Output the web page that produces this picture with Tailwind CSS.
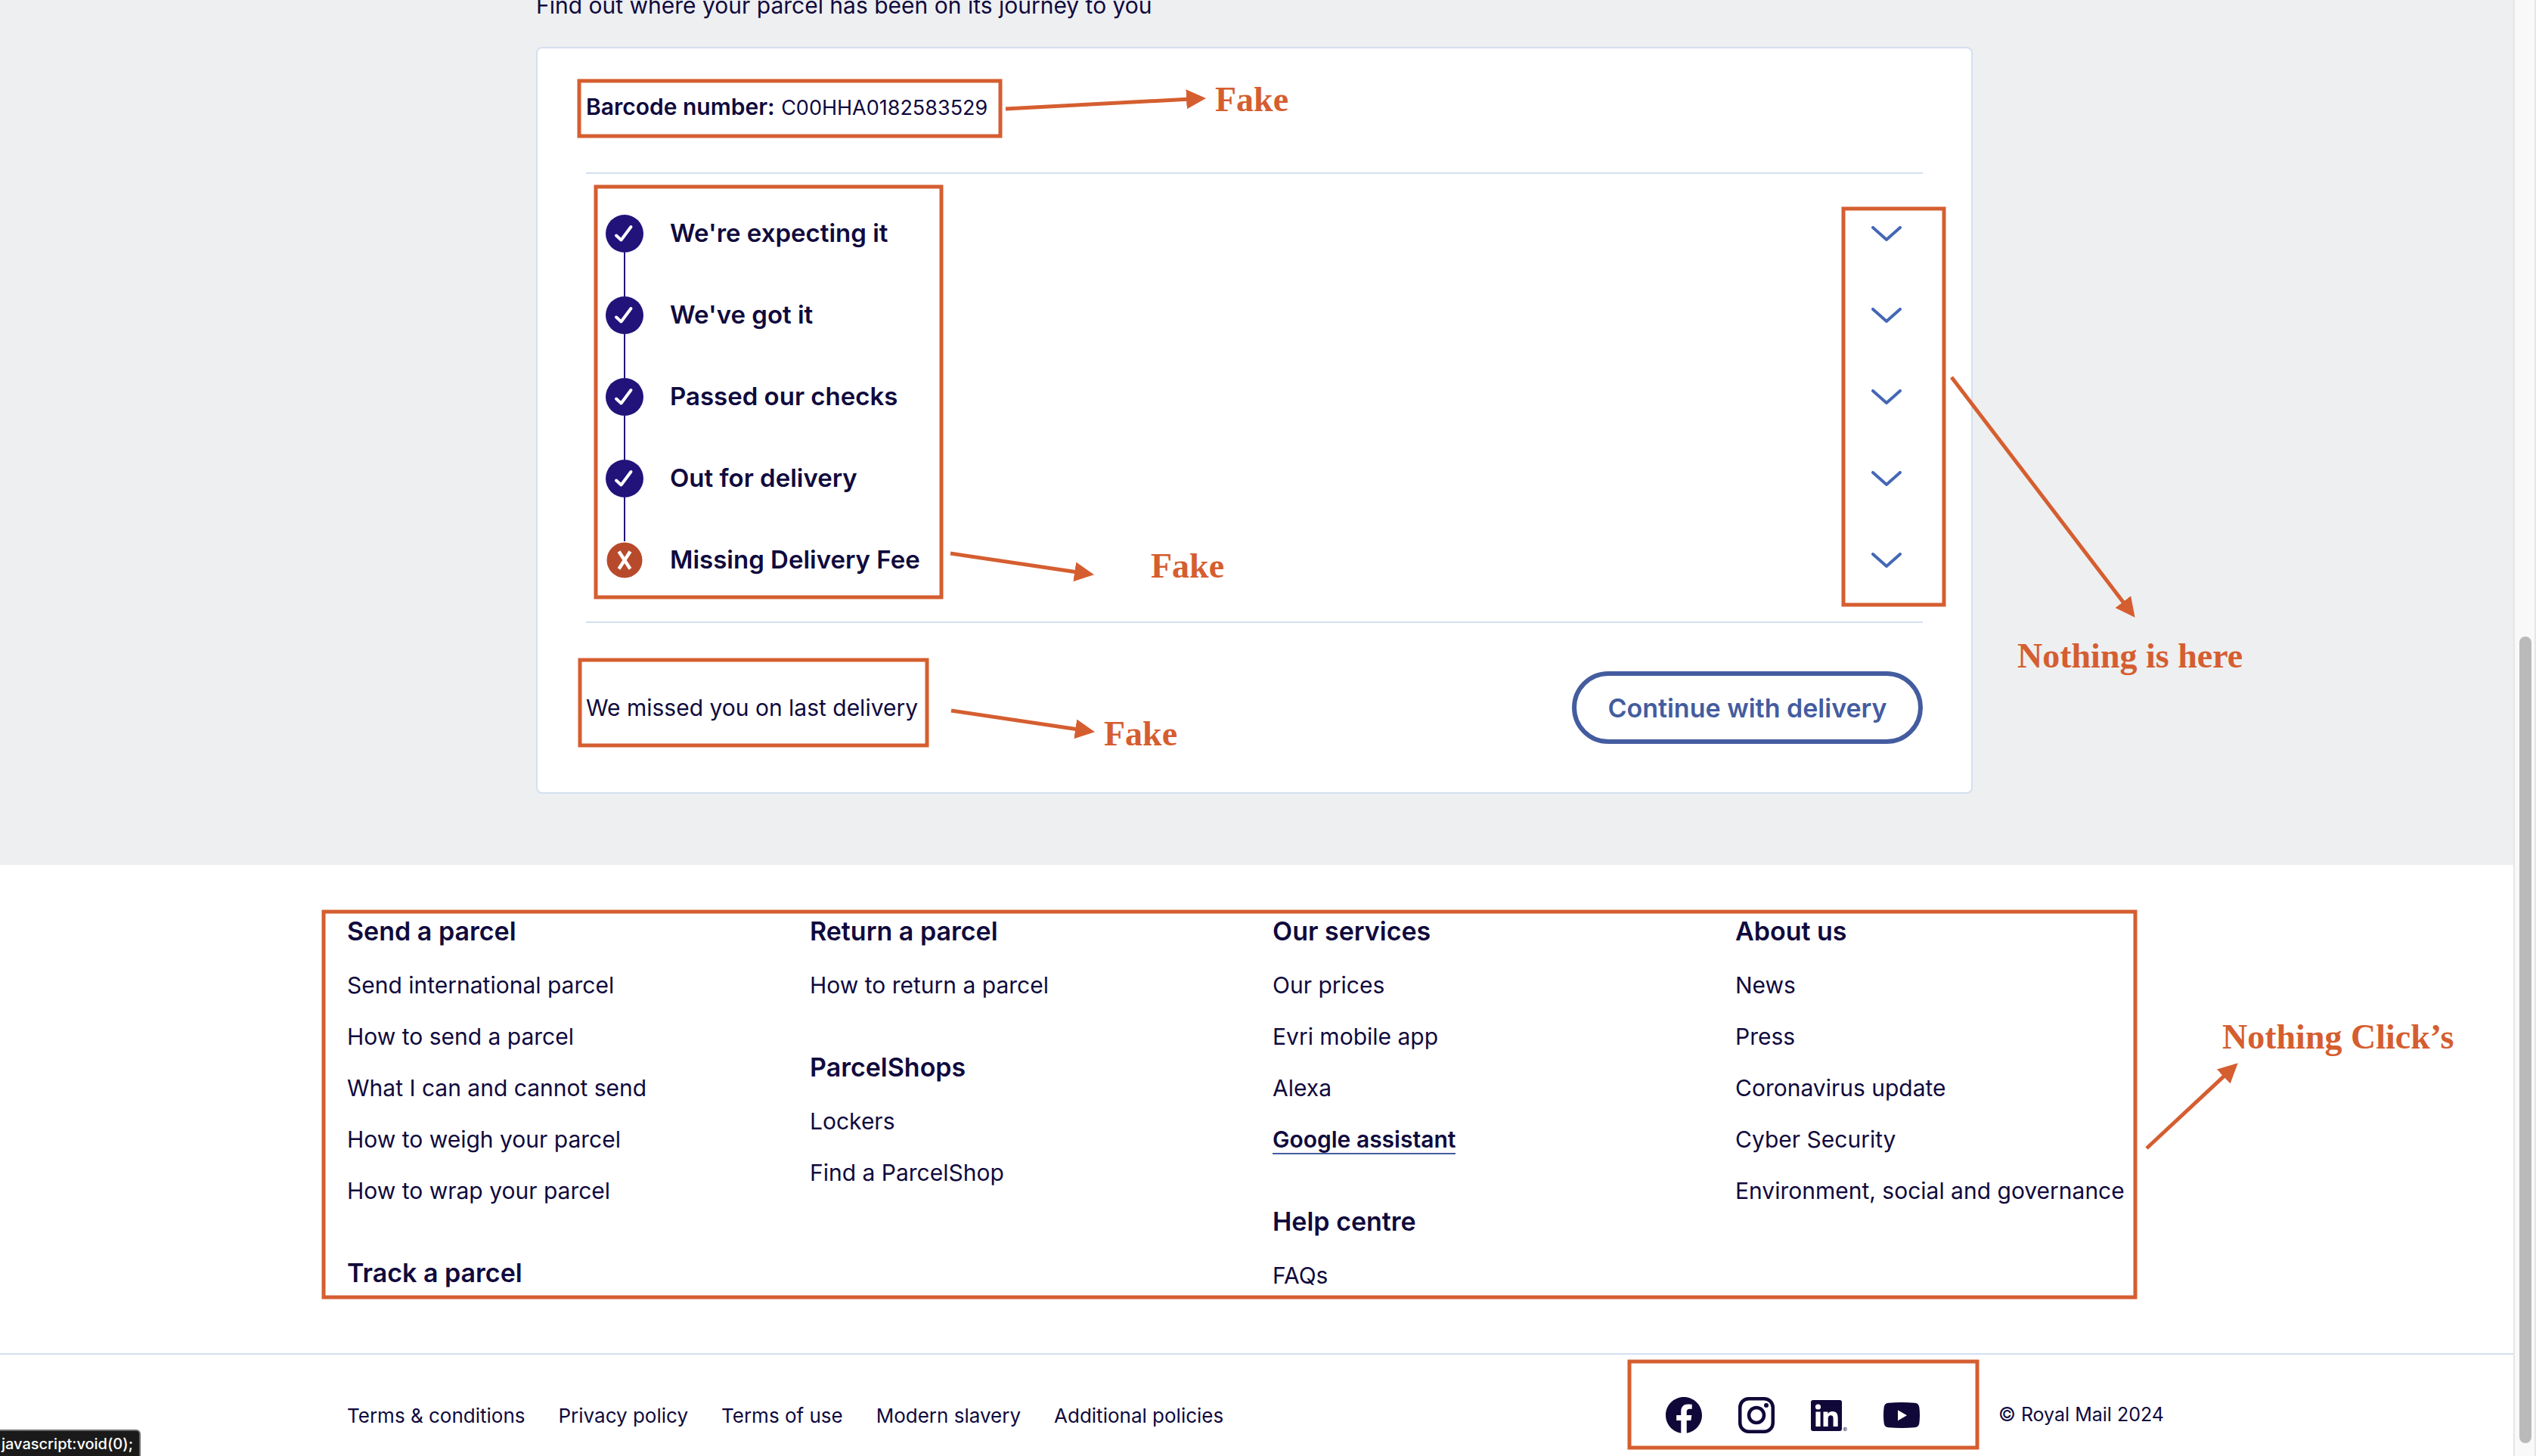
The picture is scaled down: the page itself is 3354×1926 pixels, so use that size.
<!DOCTYPE html>
<html lang="en">
<head>
<meta charset="utf-8">
<meta name="viewport" content="width=device-width, initial-scale=1">
<title>Parcel tracking</title>
<script src="https://cdn.jsdelivr.net/npm/@tailwindcss/browser@4"></script>
</head>
<body class="bg-white font-['Inter',sans-serif] text-[#100a3d]">
<div class="relative min-h-screen overflow-hidden">

  <!-- Tracking -->
  <main class="bg-[#eeeff1] pr-9 pb-[94px]">
    <div class="mx-auto max-w-[1900px]">
      <p class="-mt-3.5 text-[30px] leading-[42px]">Find out where your parcel has been on its journey to you</p>
      <section class="mt-[34px] rounded-lg border-2 border-[#d3e0f0] bg-white px-16">
        <p class="border-b-2 border-[#d3e0f0] pt-14 pb-[66px] text-[30px] leading-[42px]"><strong class="font-semibold">Barcode number:</strong> <span class="text-[27px] leading-none">C00HHA0182583529</span></p>
        <ul class="border-b-2 border-[#d3e0f0] pt-[25px] pb-[27px] pr-7 pl-[26px] text-[33px] font-semibold">
          <li class="relative flex h-[108px] items-center">
            <span class="absolute top-[79px] left-6 h-[58px] w-0.5 bg-[#21137a]"></span>
            <svg class="mr-[35px] size-[50px]" viewBox="0 0 50 50" aria-hidden="true"><circle cx="25" cy="25" r="25" fill="#21137a"/><path d="M14 27.500L20.500 33.500L33.500 16" fill="none" stroke="#fff" stroke-width="4" stroke-linecap="round" stroke-linejoin="round"/></svg>
            <span>We're expecting it</span>
            <button class="ml-auto" aria-label="Show details: We're expecting it"><svg class="h-5 w-10" viewBox="0 0 40 20" fill="none" stroke="#4567b5" stroke-width="4" stroke-linecap="round" stroke-linejoin="round"><path d="M2 2L20 18L38 2"/></svg></button>
          </li>
          <li class="relative flex h-[108px] items-center">
            <span class="absolute top-[79px] left-6 h-[58px] w-0.5 bg-[#21137a]"></span>
            <svg class="mr-[35px] size-[50px]" viewBox="0 0 50 50" aria-hidden="true"><circle cx="25" cy="25" r="25" fill="#21137a"/><path d="M14 27.500L20.500 33.500L33.500 16" fill="none" stroke="#fff" stroke-width="4" stroke-linecap="round" stroke-linejoin="round"/></svg>
            <span>We've got it</span>
            <button class="ml-auto" aria-label="Show details: We've got it"><svg class="h-5 w-10" viewBox="0 0 40 20" fill="none" stroke="#4567b5" stroke-width="4" stroke-linecap="round" stroke-linejoin="round"><path d="M2 2L20 18L38 2"/></svg></button>
          </li>
          <li class="relative flex h-[108px] items-center">
            <span class="absolute top-[79px] left-6 h-[58px] w-0.5 bg-[#21137a]"></span>
            <svg class="mr-[35px] size-[50px]" viewBox="0 0 50 50" aria-hidden="true"><circle cx="25" cy="25" r="25" fill="#21137a"/><path d="M14 27.500L20.500 33.500L33.500 16" fill="none" stroke="#fff" stroke-width="4" stroke-linecap="round" stroke-linejoin="round"/></svg>
            <span>Passed our checks</span>
            <button class="ml-auto" aria-label="Show details: Passed our checks"><svg class="h-5 w-10" viewBox="0 0 40 20" fill="none" stroke="#4567b5" stroke-width="4" stroke-linecap="round" stroke-linejoin="round"><path d="M2 2L20 18L38 2"/></svg></button>
          </li>
          <li class="relative flex h-[108px] items-center">
            <span class="absolute top-[79px] left-6 h-[58px] w-0.5 bg-[#21137a]"></span>
            <svg class="mr-[35px] size-[50px]" viewBox="0 0 50 50" aria-hidden="true"><circle cx="25" cy="25" r="25" fill="#21137a"/><path d="M14 27.500L20.500 33.500L33.500 16" fill="none" stroke="#fff" stroke-width="4" stroke-linecap="round" stroke-linejoin="round"/></svg>
            <span>Out for delivery</span>
            <button class="ml-auto" aria-label="Show details: Out for delivery"><svg class="h-5 w-10" viewBox="0 0 40 20" fill="none" stroke="#4567b5" stroke-width="4" stroke-linecap="round" stroke-linejoin="round"><path d="M2 2L20 18L38 2"/></svg></button>
          </li>
          <li class="flex h-[108px] items-center">
            <svg class="mr-[35px] size-[50px]" viewBox="0 0 50 50" aria-hidden="true"><circle cx="25" cy="25" r="23.500" fill="#b84a2c"/><path d="M17.500 13.500L32.500 36.500M32.500 13.500L17.500 36.500" stroke="#fff" stroke-width="4.500"/></svg>
            <span>Missing Delivery Fee</span>
            <button class="ml-auto" aria-label="Show details: Missing Delivery Fee"><svg class="h-5 w-10" viewBox="0 0 40 20" fill="none" stroke="#4567b5" stroke-width="4" stroke-linecap="round" stroke-linejoin="round"><path d="M2 2L20 18L38 2"/></svg></button>
          </li>
        </ul>
        <div class="flex items-center justify-between py-16">
          <p class="text-[30px] leading-[42px]">We missed you on last delivery</p>
          <button class="h-24 w-[464px] rounded-full border-[6px] border-[#445c9f] text-[34px] font-semibold text-[#445c9f]">Continue with delivery</button>
        </div>
      </section>
    </div>
  </main>

  <!-- Footer -->
  <footer>
    <nav class="pt-16 pr-9 pb-[82px]" aria-label="Site">
      <div class="mx-auto grid max-w-[2400px] grid-cols-4 gap-x-12 text-[30px] leading-[42px]">
        <div class="flex flex-col gap-16">
          <div>
            <h2 class="text-[34px] leading-[48px] font-semibold">Send a parcel</h2>
            <ul class="mt-[26px] flex flex-col gap-[26px]">
              <li><a href="#">Send international parcel</a></li>
              <li><a href="#">How to send a parcel</a></li>
              <li><a href="#">What I can and cannot send</a></li>
              <li><a href="#">How to weigh your parcel</a></li>
              <li><a href="#">How to wrap your parcel</a></li>
            </ul>
          </div>
          <h2 class="text-[34px] leading-[48px] font-semibold">Track a parcel</h2>
        </div>
        <div class="flex flex-col gap-16">
          <div>
            <h2 class="text-[34px] leading-[48px] font-semibold">Return a parcel</h2>
            <ul class="mt-[26px] flex flex-col gap-[26px]">
              <li><a href="#">How to return a parcel</a></li>
            </ul>
          </div>
          <div>
            <h2 class="text-[34px] leading-[48px] font-semibold">ParcelShops</h2>
            <ul class="mt-[26px] flex flex-col gap-[26px]">
              <li><a href="#">Lockers</a></li>
              <li><a href="#">Find a ParcelShop</a></li>
            </ul>
          </div>
        </div>
        <div class="flex flex-col gap-16">
          <div>
            <h2 class="text-[34px] leading-[48px] font-semibold">Our services</h2>
            <ul class="mt-[26px] flex flex-col gap-[26px]">
              <li><a href="#">Our prices</a></li>
              <li><a href="#">Evri mobile app</a></li>
              <li><a href="#">Alexa</a></li>
              <li><a href="#" class="border-b-2 border-[#445c9f] font-semibold">Google assistant</a></li>
            </ul>
          </div>
          <div>
            <h2 class="text-[34px] leading-[48px] font-semibold">Help centre</h2>
            <ul class="mt-[26px] flex flex-col gap-[26px]">
              <li><a href="#">FAQs</a></li>
            </ul>
          </div>
        </div>
        <div>
          <h2 class="text-[34px] leading-[48px] font-semibold">About us</h2>
          <ul class="mt-[26px] flex flex-col gap-[26px]">
            <li><a href="#">News</a></li>
            <li><a href="#">Press</a></li>
            <li><a href="#">Coronavirus update</a></li>
            <li><a href="#">Cyber Security</a></li>
            <li><a href="#" class="whitespace-nowrap">Environment, social and governance</a></li>
          </ul>
        </div>
      </div>
    </nav>
    <div class="border-t-2 border-[#d3e0f0] pt-14 pr-9 pb-[30px]">
      <div class="mx-auto flex h-12 max-w-[2400px] items-center gap-11 text-[26px] whitespace-nowrap">
        <a href="#">Terms &amp; conditions</a>
        <a href="#">Privacy policy</a>
        <a href="#">Terms of use</a>
        <a href="#">Modern slavery</a>
        <a href="#">Additional policies</a>
        <div class="ml-auto flex gap-12">
          <a href="#" aria-label="Facebook"><svg class="size-12" viewBox="0 0 24 24" fill="#100838"><path d="M24 12C24 5.370 18.630 0 12 0S0 5.370 0 12c0 5.990 4.390 10.950 10.130 11.850v-8.380H7.080V12h3.050V9.360c0-3.010 1.790-4.670 4.530-4.670 1.310 0 2.690.23 2.690.23v2.950h-1.520c-1.490 0-1.960.93-1.960 1.880V12h3.330l-.53 3.470h-2.800v8.380C19.610 22.950 24 17.990 24 12z"/></svg></a>
          <a href="#" aria-label="Instagram"><svg class="size-12" viewBox="0 0 48 48" fill="none" stroke="#100838" stroke-width="4.500"><rect x="2.250" y="2.250" width="43.500" height="43.500" rx="11.500"/><circle cx="24" cy="24" r="10"/><circle cx="37" cy="11" r="3" fill="#100838" stroke="none"/></svg></a>
          <a href="#" aria-label="LinkedIn"><svg class="size-12" viewBox="0 0 48 48"><rect y="4" width="41" height="41" rx="3" fill="#100838"/><g fill="#fff"><circle cx="9.500" cy="13" r="3.600"/><path d="M6.400 19.500h6.200V39H6.400zM16.500 19.500h5.900v2.700c.9-1.700 3-3.200 6-3.200 6.200 0 7.300 4.100 7.300 9.400V39h-6.100v-9.500c0-2.300 0-5.200-3.200-5.200s-3.700 2.500-3.700 5V39h-6.200z"/></g><g fill="none" stroke="#100838" stroke-width=".5"><circle cx="45.300" cy="42.500" r="2.300"/><path d="M44.500 44v-3h1a.8.8 0 0 1 0 1.600h-1m1 0 .8 1.400"/></g></svg></a>
          <a href="#" aria-label="YouTube"><svg class="size-12" viewBox="0 0 48 48"><path d="M7 7.700C18 6.800 30 6.800 41 7.700c4 .4 6 2.300 6.400 6.300.8 7 .8 13 0 20-.4 4-2.400 5.900-6.400 6.300-11 .9-23 .9-34 0-4-.4-6-2.300-6.400-6.300-.8-7-.8-13 0-20C1 10 3 8.100 7 7.700z" fill="#100838"/><path d="M19 17.200v14L31 24.200z" fill="#fff"/></svg></a>
        </div>
        <p class="ml-15 w-[216px] text-[25px]">© Royal Mail 2024</p>
      </div>
    </div>
  </footer>

  <!-- Review annotations -->
  <div class="pointer-events-none absolute inset-x-0 top-0 flex justify-center pr-9">
    <svg class="h-[1926px] w-[3318px] shrink-0 overflow-visible" viewBox="0 0 3318 1926">
      <defs><marker id="head" markerUnits="userSpaceOnUse" markerWidth="26" markerHeight="26" refX="25" refY="13" orient="auto"><path d="M0 0L26 13L0 26z" fill="#d55e30"/></marker></defs>
      <g fill="none" stroke="#d55e30" stroke-width="5">
        <rect x="766" y="107" width="557" height="73"/>
        <rect x="788" y="247" width="457" height="543"/>
        <rect x="2438" y="276" width="133" height="524"/>
        <rect x="767" y="873" width="459" height="113"/>
        <rect x="428" y="1206" width="2396" height="510"/>
        <rect x="2155" y="1801" width="460" height="114"/>
        <path d="M1330 144L1594 130" marker-end="url(#head)" stroke-dasharray="245 99"/>
        <path d="M1257 732L1446 760" marker-end="url(#head)" stroke-dasharray="172 99"/>
        <path d="M1258 940L1447 968" marker-end="url(#head)" stroke-dasharray="172 99"/>
        <path d="M2581 499L2823 816" marker-end="url(#head)" stroke-dasharray="379 99"/>
        <path d="M2839 1519L2959 1407" marker-end="url(#head)" stroke-dasharray="145 99"/>
      </g>
      <g class="font-['Liberation_Serif',serif] text-[46px] font-bold" fill="#d55e30">
        <text x="1607" y="147">Fake</text>
        <text x="1522" y="764">Fake</text>
        <text x="1460" y="986">Fake</text>
        <text x="2668" y="883">Nothing is here</text>
        <text x="2939" y="1387">Nothing Click’s</text>
      </g>
    </svg>
  </div>

  <!-- Scrollbar -->
  <div class="fixed inset-y-0 right-0 w-[30px] border-x-2 border-x-[#e6e6e7] bg-[#f9f9f9] px-1.5 pt-[842px] pb-[17px]">
    <div class="h-full w-4 rounded-full bg-[#bababa]"></div>
  </div>

  <!-- Link status -->
  <div class="fixed bottom-0 left-0 h-[35px] w-[186px] rounded-tr-md border-t-2 border-r-2 border-[#69696b] bg-[#1a1a1a] pl-0.5 text-[20px] leading-[34px] font-medium text-white">javascript:void(0);</div>
</div>
</body>
</html>
